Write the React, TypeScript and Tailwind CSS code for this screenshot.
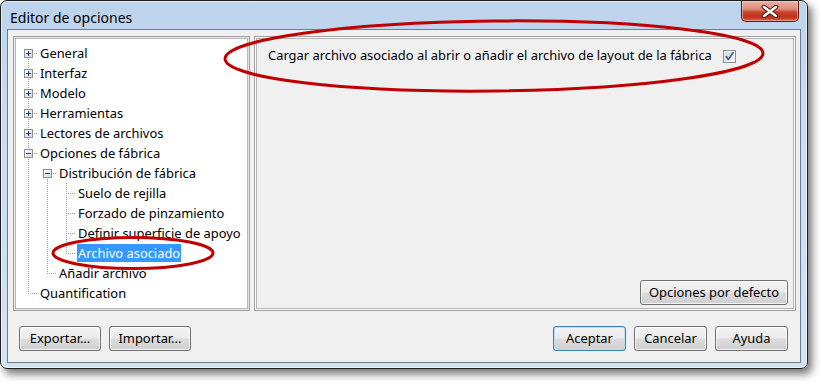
import React, { useId } from "react";

type CellKind = "firstBox" | "midBox" | "pass" | "mid" | "last";

function Cell({ kind, sign }: { kind: CellKind; sign?: "plus" | "minus" }) {
  const gid = useId();
  const dot = "#a0a0a0";
  const hasBox = kind === "firstBox" || kind === "midBox";
  return (
    <svg width="19" height="20" className="block shrink-0" shapeRendering="crispEdges">
      <defs>
        <linearGradient id={gid} x1="0" y1="0" x2="1" y2="1">
          <stop offset="0" stopColor="#ffffff" />
          <stop offset="1" stopColor="#d8d8d8" />
        </linearGradient>
      </defs>
      {(kind === "pass" || kind === "midBox" || kind === "mid") && (
        <line x1="9.5" y1="0" x2="9.5" y2="20" stroke={dot} strokeDasharray="1 1" />
      )}
      {kind === "firstBox" && (
        <line x1="9.5" y1="10" x2="9.5" y2="20" stroke={dot} strokeDasharray="1 1" />
      )}
      {kind === "last" && (
        <line x1="9.5" y1="0" x2="9.5" y2="10" stroke={dot} strokeDasharray="1 1" />
      )}
      {(kind === "mid" || kind === "last") && (
        <line x1="9" y1="10.5" x2="19" y2="10.5" stroke={dot} strokeDasharray="1 1" />
      )}
      {hasBox && (
        <>
          <line x1="15" y1="10.5" x2="19" y2="10.5" stroke={dot} strokeDasharray="1 1" />
          <rect x="5.5" y="6.5" width="8" height="8" fill={`url(#${gid})`} stroke="#8f8f8f" />
          <line x1="7" y1="10.5" x2="12" y2="10.5" stroke="#22406a" />
          {sign === "plus" && <line x1="9.5" y1="8" x2="9.5" y2="13" stroke="#22406a" />}
        </>
      )}
    </svg>
  );
}

type RowDef = { cells: { k: CellKind; s?: "plus" | "minus" }[]; label: string; selected?: boolean };

const rows: RowDef[] = [
  { cells: [{ k: "firstBox", s: "plus" }], label: "General" },
  { cells: [{ k: "midBox", s: "plus" }], label: "Interfaz" },
  { cells: [{ k: "midBox", s: "plus" }], label: "Modelo" },
  { cells: [{ k: "midBox", s: "plus" }], label: "Herramientas" },
  { cells: [{ k: "midBox", s: "plus" }], label: "Lectores de archivos" },
  { cells: [{ k: "midBox", s: "minus" }], label: "Opciones de fábrica" },
  { cells: [{ k: "pass" }, { k: "firstBox", s: "minus" }], label: "Distribución de fábrica" },
  { cells: [{ k: "pass" }, { k: "pass" }, { k: "mid" }], label: "Suelo de rejilla" },
  { cells: [{ k: "pass" }, { k: "pass" }, { k: "mid" }], label: "Forzado de pinzamiento" },
  { cells: [{ k: "pass" }, { k: "pass" }, { k: "mid" }], label: "Definir superficie de apoyo" },
  { cells: [{ k: "pass" }, { k: "pass" }, { k: "last" }], label: "Archivo asociado", selected: true },
  { cells: [{ k: "pass" }, { k: "last" }], label: "Añadir archivo" },
  { cells: [{ k: "last" }], label: "Quantification" },
];

function Btn({ label, w, isDefault }: { label: string; w: string; isDefault?: boolean }) {
  const base =
    "h-[25px] rounded-[3px] border flex items-center justify-center text-[12.9px] text-black bg-[linear-gradient(180deg,#f3f3f3_0%,#ebebeb_48%,#dddddd_52%,#cfcfcf_100%)]";
  const cls = isDefault
    ? `${base} border-[#3c7fb1] shadow-[inset_0_0_0_1px_#b7e3f8]`
    : `${base} border-[#707070] shadow-[inset_0_0_0_1px_rgba(255,255,255,0.75)]`;
  return <div className={`${cls} ${w}`}>{label}</div>;
}

function CheckBox() {
  return (
    <svg width="13" height="13" className="block shrink-0" shapeRendering="geometricPrecision">
      <defs>
        <linearGradient id="cbg" x1="0" y1="0" x2="1" y2="1">
          <stop offset="0" stopColor="#d5d8dc" />
          <stop offset="1" stopColor="#f7f7f7" />
        </linearGradient>
      </defs>
      <rect x="0.5" y="0.5" width="12" height="12" fill="#f4f4f4" stroke="#8e8f8f" />
      <rect x="2" y="2" width="9" height="9" fill="url(#cbg)" />
      <path d="M3.2 6.6 L5.4 9.4 L10 2.8" fill="none" stroke="#3e5a9a" strokeWidth="1.7" strokeLinecap="round" strokeLinejoin="round" />
    </svg>
  );
}

function CloseButton() {
  return (
    <div className="w-[58px] h-[21px] rounded-b-[5px] border border-t-0 border-[#5b1a10] bg-[linear-gradient(180deg,#eab1a5_0%,#dd8e7c_40%,#c9452c_55%,#c1301a_80%,#d8644b_100%)] shadow-[inset_0_0_0_1px_rgba(255,210,200,0.55)] flex items-center justify-center">
      <svg width="18" height="13" className="block">
        <path d="M3 2 L15 11 M15 2 L3 11" stroke="#4a1208" strokeWidth="4.6" strokeLinecap="round" />
        <path d="M3 2 L15 11 M15 2 L3 11" stroke="#ffffff" strokeWidth="2.6" strokeLinecap="round" />
      </svg>
    </div>
  );
}

export default function App() {
  return (
    <div
      className="relative w-[821px] h-[388px] bg-white overflow-hidden"
      style={{ fontFamily: '"Noto Sans", "Open Sans", sans-serif' }}
    >
      <div className="w-[808px] h-[369px] rounded-[7px] border border-[#1e1e1e] bg-[linear-gradient(180deg,#bcd3ec_0%,#c9dcf1_30%,#d3e3f4_100%)] shadow-[inset_0_0_0_1px_rgba(255,255,255,0.6),4px_5px_8px_rgba(0,0,0,0.55)] flex flex-col">
        <div className="h-[28px] flex items-start justify-between shrink-0">
          <span className="pl-[9px] pt-[7px] text-[14px] leading-[20px] text-black">Editor de opciones</span>
          <div className="mr-[8px]">
            <CloseButton />
          </div>
        </div>
        <div className="mx-[6px] mb-[5px] flex-1 bg-[#f0f0f0] border border-[#6a7d92] flex flex-col pt-[6px]">
          <div className="flex gap-[4px] pl-[5px] pr-[4px] h-[275px] shrink-0">
            <div className="w-[237px] h-full border border-[#a0a0a0] p-[1px] bg-[#e8e8e8]">
              <div className="w-full h-full border border-[#b9b9b9] bg-white pl-[3px] pt-[4px] text-[12.9px] text-black">
                {rows.map((r, i) => (
                  <div key={i} className="flex h-[20px] items-center">
                    {r.cells.map((c, j) => (
                      <Cell key={j} kind={c.k} sign={c.s} />
                    ))}
                    <span
                      className={`ml-[1px] px-[1px] h-[18px] leading-[18px] whitespace-nowrap ${
                        r.selected ? "bg-[#3399ff] text-white" : ""
                      }`}
                    >
                      {r.label}
                    </span>
                  </div>
                ))}
              </div>
            </div>
            <div className="flex-1 h-full border border-[#a0a0a0] p-[1px] bg-[#fbfbfb]">
              <div className="w-full h-full border border-[#b4b4b4] bg-[#f0f0f0] flex flex-col">
                <div className="flex items-center gap-[11px] pl-[11px] pt-[7px] h-[27px] text-[12.9px] text-black">
                  <span className="whitespace-nowrap">
                    Cargar archivo asociado al abrir o añadir el archivo de layout de la fábrica
                  </span>
                  <CheckBox />
                </div>
                <div className="flex-1" />
                <div className="flex justify-end pr-[5px] pb-[3px]">
                  <Btn label="Opciones por defecto" w="w-[148px]" />
                </div>
              </div>
            </div>
          </div>
          <div className="flex justify-between items-center mt-[15px] pl-[11px] pr-[12px]">
            <div className="flex gap-[8px]">
              <Btn label="Exportar..." w="w-[82px]" />
              <Btn label="Importar..." w="w-[82px]" />
            </div>
            <div className="flex gap-[8px]">
              <Btn label="Aceptar" w="w-[73px]" isDefault />
              <Btn label="Cancelar" w="w-[73px]" />
              <Btn label="Ayuda" w="w-[73px]" />
            </div>
          </div>
        </div>
      </div>
      <svg
        width="821"
        height="388"
        className="absolute top-0 left-0 pointer-events-none"
      >
        <ellipse
          cx="494"
          cy="56"
          rx="269"
          ry="35"
          fill="none"
          stroke="#c00000"
          strokeWidth="3"
          transform="rotate(-0.6 494 56)"
        />
        <ellipse cx="133" cy="253" rx="80" ry="15.5" fill="none" stroke="#c00000" strokeWidth="3" />
      </svg>
    </div>
  );
}
